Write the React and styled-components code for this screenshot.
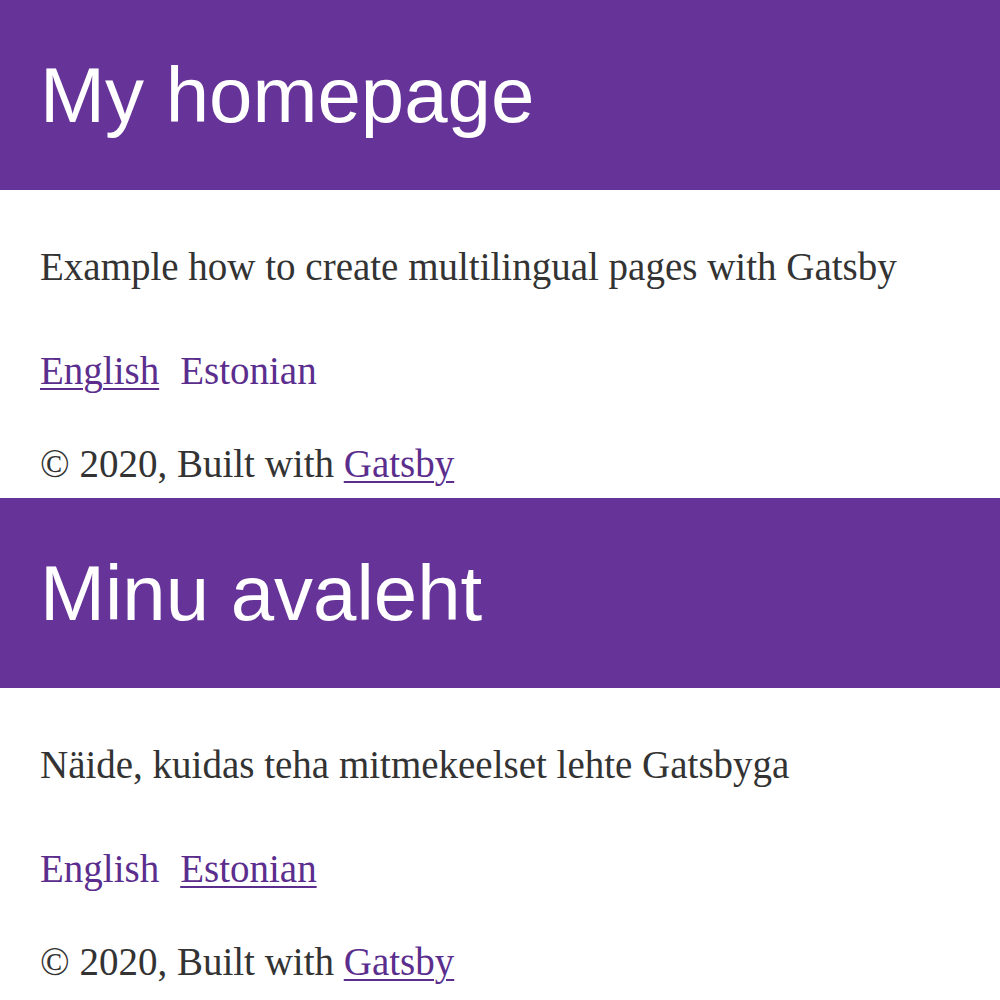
import React from 'react';
import styled, { createGlobalStyle } from 'styled-components';

// //////////////// GLOBAL //////////////// //
const GlobalStyle = createGlobalStyle`
  body {
    margin: 0;
    background: #ffffff;
    color: #333333;
    font-family: "Liberation Serif", "Times New Roman", serif;
  }
`;

// //////////////// STYLED COMPONENTS //////////////// //
const PageBlock = styled.section`
  display: flex;
  flex-direction: column;
`;

const Header = styled.header`
  height: 190px;
  display: flex;
  align-items: center;
  padding: 0 40px;
  background: #663399;
`;

const Title = styled.h1`
  margin: 0;
  font-family: "Liberation Sans", Arial, sans-serif;
  font-weight: 400;
  font-size: 78px;
  line-height: 1;
  color: #ffffff;
`;

const Main = styled.main`
  display: flex;
  flex-direction: column;
  padding: 57px 40px 15px;
`;

const Text = styled.p`
  margin: 0;
  font-size: 39px;
  line-height: 1;
`;

const LangNav = styled.nav`
  display: flex;
  gap: 21px;
  margin-top: 65px;
  font-size: 39px;
  line-height: 1;
`;

const LangLink = styled.a`
  color: #5b2e8e;
  text-decoration: ${(p) => (p.$active ? 'underline' : 'none')};
  text-decoration-thickness: 2px;
  text-underline-offset: 4px;
`;

const Footer = styled.footer`
  margin-top: 54px;
  font-size: 39px;
  line-height: 1;

  a {
    color: #5b2e8e;
    text-decoration: underline;
    text-decoration-thickness: 2px;
    text-underline-offset: 4px;
  }
`;

// //////////////// DATA //////////////// //
const pages = [
  {
    lang: 'en',
    title: 'My homepage',
    text: 'Example how to create multilingual pages with Gatsby',
  },
  {
    lang: 'et',
    title: 'Minu avaleht',
    text: 'Näide, kuidas teha mitmekeelset lehte Gatsbyga',
  },
];

// //////////////// MAIN COMPONENT //////////////// //
const Page = ({ page }) => (
  <PageBlock lang={page.lang}>
    <Header>
      <Title>{page.title}</Title>
    </Header>
    <Main>
      <Text>{page.text}</Text>
      <LangNav>
        <LangLink href="#en" $active={page.lang === 'en'}>English</LangLink>
        <LangLink href="#et" $active={page.lang === 'et'}>Estonian</LangLink>
      </LangNav>
      <Footer>
        © 2020, Built with <a href="#gatsby">Gatsby</a>
      </Footer>
    </Main>
  </PageBlock>
);

const App = () => (
  <>
    <GlobalStyle />
    {pages.map((page) => (
      <Page key={page.lang} page={page} />
    ))}
  </>
);

export default App;
